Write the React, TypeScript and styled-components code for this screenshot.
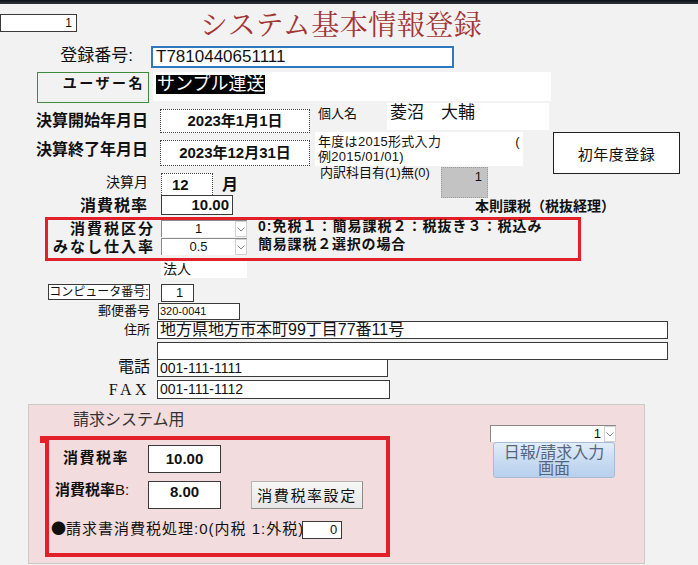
import React from "react";
import styled, { createGlobalStyle } from "styled-components";

const GlobalStyle = createGlobalStyle`
  html, body { margin: 0; padding: 0; background: #f2f2f2; }
  body { font-family: "Liberation Sans", "Noto Sans CJK JP", sans-serif; color: #111; }
  * { box-sizing: border-box; }
`;

const Screen = styled.div`
  width: 698px;
  height: 565px;
  overflow: hidden;
  background: #f2f2f2;
`;

const TopBar = styled.div`
  height: 4px;
  background: linear-gradient(#0b0f18, #30343c);
`;

const Row = styled.div<{ $h: number; $mt?: number; $ml?: number }>`
  display: flex;
  align-items: flex-start;
  height: ${p => p.$h}px;
  margin-top: ${p => p.$mt ?? 0}px;
  margin-left: ${p => p.$ml ?? 0}px;
`;

const Title = styled.h1`
  margin: 2px 0 0 123px;
  font-family: "Noto Serif CJK JP", "Noto Sans CJK JP", serif;
  font-weight: 400;
  font-size: 28px;
  line-height: 34px;
  letter-spacing: 0.5px;
  color: #a23535;
`;

type LabelProps = {
  $w?: number;
  $size?: number;
  $bold?: boolean;
  $ls?: number;
  $mt?: number;
  $ml?: number;
  $right?: boolean;
  $serif?: boolean;
};

const FieldLabel = styled.div<LabelProps>`
  flex: none;
  width: ${p => (p.$w ? `${p.$w}px` : "auto")};
  margin-left: ${p => p.$ml ?? 0}px;
  margin-top: ${p => p.$mt ?? 0}px;
  font-family: ${p => (p.$serif ? `"Liberation Serif", serif` : `"Liberation Sans", "Noto Sans CJK JP", sans-serif`)};
  font-size: ${p => p.$size ?? 14}px;
  font-weight: ${p => (p.$bold ? 700 : 400)};
  letter-spacing: ${p => p.$ls ?? 0}px;
  text-align: ${p => (p.$right ? "right" : "left")};
  line-height: 1.2;
  white-space: nowrap;
  color: #111;
`;

const Bullet = styled.span`
  font-family: "Noto Sans CJK JP", sans-serif;
  letter-spacing: 0;
`;

type BoxProps = {
  $w: number;
  $h: number;
  $ml?: number;
  $mt?: number;
  $size?: number;
  $bold?: boolean;
  $align?: "left" | "right" | "center";
  $pad?: number;
};

const TextBox = styled.div<BoxProps>`
  flex: none;
  width: ${p => p.$w}px;
  height: ${p => p.$h}px;
  margin-left: ${p => p.$ml ?? 0}px;
  margin-top: ${p => p.$mt ?? 0}px;
  padding: 0 ${p => p.$pad ?? 3}px;
  background: #fff;
  border: 1px solid #3a3a3a;
  font-size: ${p => p.$size ?? 14}px;
  font-weight: ${p => (p.$bold ? 700 : 400)};
  text-align: ${p => p.$align ?? "left"};
  line-height: ${p => p.$h - 2}px;
  white-space: nowrap;
  overflow: hidden;
`;

const BlueBox = styled(TextBox)`
  border: 2px solid #2f78bd;
  line-height: ${p => p.$h - 4}px;
`;

const PlainField = styled(TextBox)`
  border: none;
  line-height: 1.2;
`;

const DottedBox = styled(TextBox)`
  border: 1px dotted #444;
`;

const GrayBox = styled(TextBox)`
  background: #c3c3c3;
  border: 1px dotted #9a9a9a;
  line-height: 18px;
`;

const TopAlignedBox = styled(TextBox)`
  line-height: 18px;
  padding-top: 1px;
`;

const UserFrame = styled.div`
  flex: none;
  width: 112px;
  height: 31px;
  margin-left: 37px;
  border: 1px solid #3d8c3d;
  padding: 2px 3px 0 0;
  text-align: right;
  font-size: 14px;
  font-weight: 700;
  letter-spacing: 2.5px;
  line-height: 16px;
  white-space: nowrap;
`;

const Highlight = styled.span`
  display: inline-block;
  margin: 3px 0 0 3px;
  padding: 0 1px;
  background: #000;
  color: #fff;
  font-size: 18px;
  line-height: 19px;
`;

const NoteBox = styled.div`
  flex: none;
  width: 208px;
  height: 34px;
  margin-left: 5px;
  padding: 2px 3px 0 3px;
  background: #fff;
  font-size: 13px;
  line-height: 15px;
  letter-spacing: 0.3px;
`;

const NoteLine = styled.div`
  display: flex;
  justify-content: space-between;
`;

const FlatButton = styled.div<BoxProps>`
  flex: none;
  width: ${p => p.$w}px;
  height: ${p => p.$h}px;
  margin-left: ${p => p.$ml ?? 0}px;
  margin-top: ${p => p.$mt ?? 0}px;
  display: flex;
  align-items: center;
  justify-content: center;
  background: #fff;
  border: 1px solid #222;
  font-size: ${p => p.$size ?? 15}px;
  letter-spacing: 0.5px;
`;

const SysButton = styled(FlatButton)`
  background: linear-gradient(#f7f7f7, #e6e6e6);
  border: 1px solid #b4b4b4;
  border-right-color: #8c8c8c;
  border-bottom-color: #8c8c8c;
  letter-spacing: 1.6px;
  padding-bottom: 2px;
`;

const GlossButton = styled.div`
  width: 122px;
  height: 36px;
  margin: 0 0 0 3px;
  border: 1px solid #a6bcd6;
  border-radius: 3px;
  background: linear-gradient(#e3edf9, #c7dbf1 55%, #b8d0ec);
  color: #56647e;
  font-size: 16px;
  line-height: 16px;
  text-align: center;
  padding-top: 1px;
  overflow: hidden;
`;

const GlossLine = styled.div`
  height: 16px;
  line-height: 17px;
`;

const ComboBox = styled.div<{ $w: number; $ml?: number; $mt?: number }>`
  flex: none;
  display: flex;
  width: ${p => p.$w}px;
  height: 17px;
  margin-left: ${p => p.$ml ?? 0}px;
  margin-top: ${p => p.$mt ?? 0}px;
  background: #fff;
  border-top: 1px solid #8a8a8a;
  border-left: 1px solid #8a8a8a;
  font-size: 13px;
  line-height: 16px;
`;

const ComboValue = styled.div<{ $align?: "center" | "right" }>`
  flex: 1;
  text-align: ${p => p.$align ?? "center"};
  padding-right: ${p => (p.$align === "right" ? 3 : 0)}px;
`;

const ComboArrow = styled.div`
  flex: none;
  width: 12px;
  height: 16px;
  border: 1px solid #d2d2d2;
  display: flex;
  align-items: center;
  justify-content: center;
`;

const RedFrame = styled.div<{ $w: number; $h: number; $ml?: number; $mt?: number; $bw: number }>`
  position: relative;
  width: ${p => p.$w}px;
  height: ${p => p.$h}px;
  margin-left: ${p => p.$ml ?? 0}px;
  margin-top: ${p => p.$mt ?? 0}px;
  border: ${p => p.$bw}px solid #e3202a;
`;

const BillingFrame = styled(RedFrame)`
  &::before {
    content: "";
    position: absolute;
    left: -9px;
    top: -4px;
    width: 5px;
    height: 7px;
    background: #e3202a;
  }
`;

const PinkPanel = styled.div`
  display: flex;
  width: 617px;
  height: 160px;
  margin: 5px 0 0 28px;
  background: #f3dcdd;
  border: 1px solid #c9c9c9;
`;

const PanelColumn = styled.div<{ $ml?: number; $mt?: number }>`
  display: flex;
  flex-direction: column;
  margin-left: ${p => p.$ml ?? 0}px;
  margin-top: ${p => p.$mt ?? 0}px;
`;

const PanelTitle = styled.div`
  margin: 5px 0 0 44px;
  font-size: 16px;
  line-height: 20px;
  color: #333;
`;

const Chevron = () => (
  <svg width="8" height="5" viewBox="0 0 8 5">
    <path d="M0.5 0.5 L4 4 L7.5 0.5" fill="none" stroke="#8a8a8a" strokeWidth="1" />
  </svg>
);

const Combo = ({ value, w, ml, mt, align }: { value: string; w: number; ml?: number; mt?: number; align?: "center" | "right" }) => (
  <ComboBox $w={w} $ml={ml} $mt={mt}>
    <ComboValue $align={align}>{value}</ComboValue>
    <ComboArrow>
      <Chevron />
    </ComboArrow>
  </ComboBox>
);

export default function App() {
  return (
    <>
      <GlobalStyle />
      <Screen>
        <TopBar />
        <Row $h={38}>
          <TextBox $w={77} $h={18} $mt={10} $align="right" $size={12} $pad={4}>1</TextBox>
          <Title>システム基本情報登録</Title>
        </Row>

        <Row $h={23} $mt={4}>
          <FieldLabel $w={133} $right $size={17} $mt={0}>登録番号:</FieldLabel>
          <BlueBox $w={303} $h={22} $ml={18} $size={17}>T7810440651111</BlueBox>
        </Row>

        <Row $h={31} $mt={3}>
          <UserFrame>ユーザー名</UserFrame>
          <PlainField $w={398} $h={29} $ml={4} $pad={0}>
            <Highlight>サンプル運送</Highlight>
          </PlainField>
        </Row>

        <Row $h={29}>
          <FieldLabel $w={148} $right $bold $size={16} $mt={8}>決算開始年月日</FieldLabel>
          <DottedBox $w={150} $h={24} $ml={12} $mt={6} $align="center" $bold $size={15}>2023年1月1日</DottedBox>
          <FieldLabel $w={69} $ml={8} $mt={3} $size={13}>個人名</FieldLabel>
          <PlainField $w={162} $h={27} $size={17} $pad={3}>菱沼　大輔</PlainField>
        </Row>

        <Row $h={34}>
          <FieldLabel $w={148} $right $bold $size={16} $mt={8}>決算終了年月日</FieldLabel>
          <DottedBox $w={150} $h={26} $ml={12} $mt={8} $align="center" $bold $size={15}>2023年12月31日</DottedBox>
          <NoteBox>
            <NoteLine>
              <span>年度は2015形式入力</span>
              <span>(</span>
            </NoteLine>
            <div>例2015/01/01)</div>
          </NoteBox>
          <FlatButton $w={127} $h={42} $ml={30}>初年度登録</FlatButton>
        </Row>

        <Row $h={29}>
          <FieldLabel $w={148} $right $size={14} $mt={8}>決算月</FieldLabel>
          <DottedBox $w={52} $h={24} $ml={13} $mt={7} $bold $size={15} $pad={10}>12</DottedBox>
          <FieldLabel $w={16} $ml={9} $mt={9} $bold $size={16}>月</FieldLabel>
          <FieldLabel $w={121} $ml={82} $mt={-1} $size={13}>内訳科目有(1)無(0)</FieldLabel>
          <GrayBox $w={47} $h={31} $mt={1} $align="right" $size={13} $pad={5}>1</GrayBox>
        </Row>

        <Row $h={21}>
          <FieldLabel $w={148} $right $bold $size={16} $ls={1} $mt={1}>消費税率</FieldLabel>
          <TextBox $w={72} $h={20} $ml={13} $align="right" $bold $size={15} $pad={3}>10.00</TextBox>
          <FieldLabel $ml={242} $mt={3} $bold $size={14}>本則課税（税抜経理）</FieldLabel>
        </Row>

        <RedFrame $w={536} $h={44} $ml={45} $mt={1} $bw={3}>
          <Row $h={17}>
            <FieldLabel $w={107} $right $bold $size={15} $ls={2}>消費税区分</FieldLabel>
            <Combo value="1" w={86} ml={6} />
            <FieldLabel $ml={11} $mt={-2} $bold $size={14} $ls={1}>0:免税１：簡易課税２：税抜き３：税込み</FieldLabel>
          </Row>
          <Row $h={17} $mt={1}>
            <FieldLabel $w={107} $right $bold $size={15} $ls={2}>みなし仕入率</FieldLabel>
            <Combo value="0.5" w={86} ml={6} />
            <FieldLabel $ml={11} $mt={-2} $bold $size={14} $ls={0.8}>簡易課税２選択の場合</FieldLabel>
          </Row>
        </RedFrame>

        <Row $h={17}>
          <PlainField $w={86} $h={17} $ml={161} $size={14} $pad={2}>法人</PlainField>
        </Row>

        <Row $h={18} $mt={6}>
          <TextBox $w={102} $h={16} $ml={48} $size={12} $align="center" $pad={0}>コンピュータ番号:</TextBox>
          <TextBox $w={33} $h={18} $ml={11} $size={13} $pad={14}>1</TextBox>
        </Row>

        <Row $h={17} $mt={1}>
          <FieldLabel $w={150} $right $size={13}>郵便番号</FieldLabel>
          <TextBox $w={82} $h={17} $ml={8} $size={11} $pad={1}>320-0041</TextBox>
        </Row>

        <Row $h={18} $mt={1}>
          <FieldLabel $w={150} $right $size={13} $mt={1}>住所</FieldLabel>
          <TextBox $w={511} $h={18} $ml={7} $size={16} $pad={2}>地方県地方市本町99丁目77番11号</TextBox>
        </Row>

        <Row $h={18} $mt={3}>
          <TextBox $w={511} $h={18} $ml={157} />
        </Row>

        <Row $h={18} $mt={-1}>
          <FieldLabel $w={150} $right $size={16} $mt={-2}>電話</FieldLabel>
          <TextBox $w={231} $h={18} $ml={7} $size={14} $pad={2}>001-111-1111</TextBox>
        </Row>

        <Row $h={19} $mt={3}>
          <FieldLabel $w={150} $right $serif $size={16} $ls={3.5}>FAX</FieldLabel>
          <TextBox $w={233} $h={19} $ml={7} $size={14} $pad={2}>001-111-1112</TextBox>
        </Row>

        <PinkPanel>
          <PanelColumn>
            <PanelTitle>請求システム用</PanelTitle>
            <BillingFrame $w={345} $h={121} $ml={16} $mt={6} $bw={4}>
              <Row $h={28} $mt={5}>
                <FieldLabel $w={85} $ml={14} $mt={4} $bold $size={15} $ls={1.5}>消費税率</FieldLabel>
                <TextBox $w={73} $h={28} $align="center" $bold $size={15}>10.00</TextBox>
              </Row>
              <Row $h={28} $mt={8}>
                <FieldLabel $w={93} $ml={6} $mt={0} $size={15}>
                  <b>消費税率</b>B:
                </FieldLabel>
                <TopAlignedBox $w={73} $h={28} $align="center" $bold $size={15}>8.00</TopAlignedBox>
                <SysButton $w={112} $h={28} $ml={30}>消費税率設定</SysButton>
              </Row>
              <Row $h={20} $mt={10}>
                <FieldLabel $ml={2} $size={15} $ls={1}>
                  <Bullet>●</Bullet>請求書消費税処理:0(内税 1:外税)
                </FieldLabel>
                <TextBox $w={40} $h={18} $ml={-2} $mt={2} $align="right" $size={13} $pad={4}>0</TextBox>
              </Row>
            </BillingFrame>
          </PanelColumn>
          <PanelColumn $ml={100} $mt={20}>
            <Combo value="1" w={126} align="right" />
            <GlossButton>
              <GlossLine>日報/請求入力</GlossLine>
              <GlossLine>画面</GlossLine>
            </GlossButton>
          </PanelColumn>
        </PinkPanel>
      </Screen>
    </>
  );
}
